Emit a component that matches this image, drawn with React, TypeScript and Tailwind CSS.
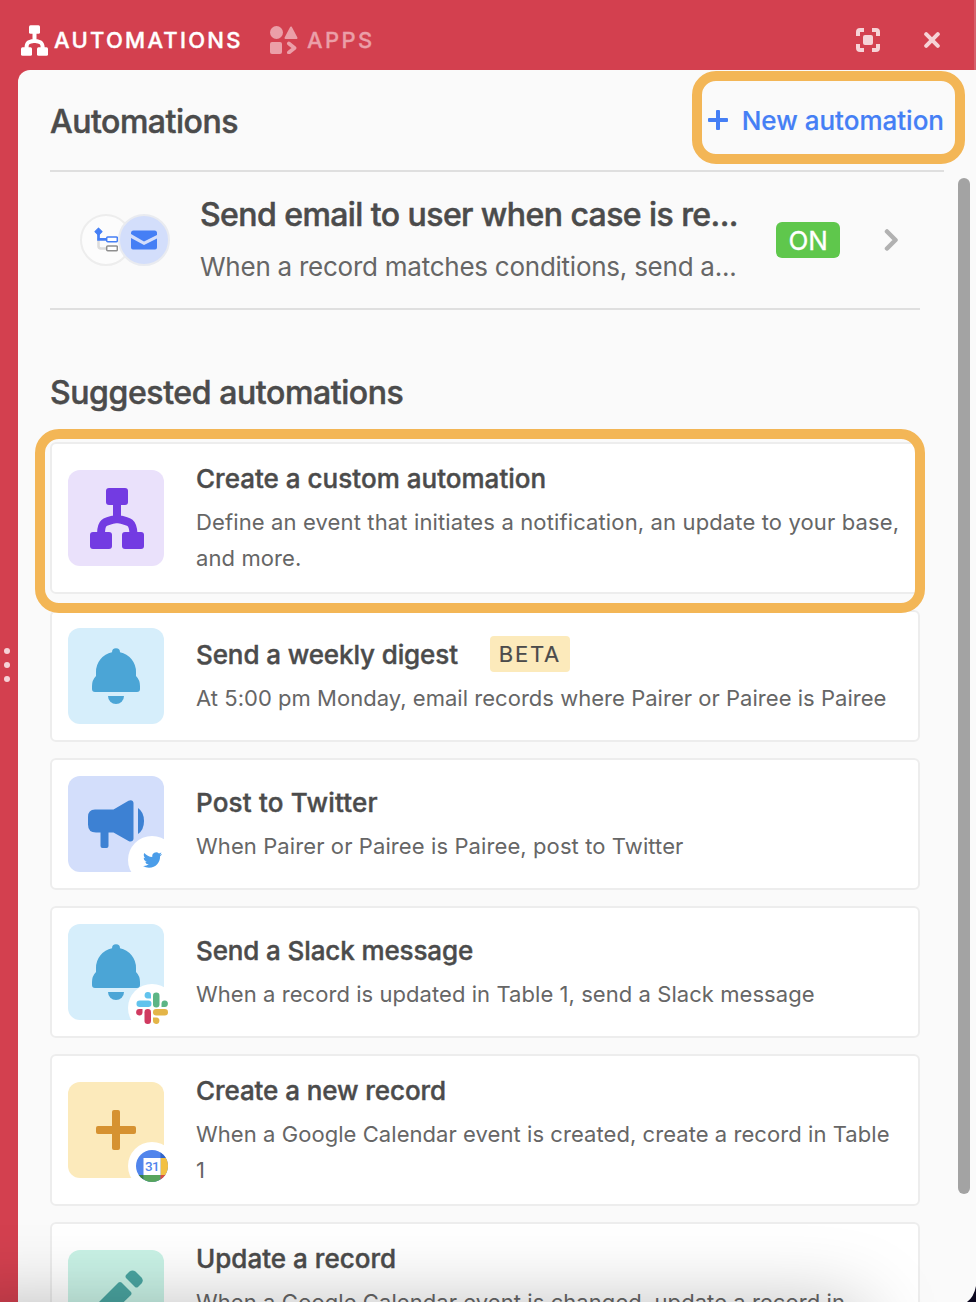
import React from "react";

type SvgProps = { className?: string };

function FlowIcon({ className }: SvgProps) {
  return (
    <svg viewBox="0 0 54 61" className={className} fill="currentColor">
      <rect x="16" y="0" width="22" height="17" rx="3" />
      <rect x="0" y="44" width="22" height="17" rx="3" />
      <rect x="32" y="44" width="22" height="17" rx="3" />
      <path d="M27 15V31M11 46C11 34 14 33.500 27 31C40 33.500 43 34 43.500 46" fill="none" stroke="currentColor" strokeWidth="8" />
    </svg>
  );
}

function AppsIcon({ className }: SvgProps) {
  return (
    <svg viewBox="0 0 28 28" className={className} fill="currentColor">
      <circle cx="6.500" cy="6.500" r="6.500" />
      <path d="M21 1.500L26.500 12H15.500Z" stroke="currentColor" strokeWidth="2" strokeLinejoin="round" />
      <rect x="0" y="16" width="12" height="12" rx="2" />
      <path d="M18.900 17.500L24.500 22L18.900 26.500" fill="none" stroke="currentColor" strokeWidth="3.800" strokeLinecap="round" strokeLinejoin="round" />
    </svg>
  );
}

function FullscreenIcon({ className }: SvgProps) {
  return (
    <svg viewBox="0 0 24 24" className={className} fill="none" stroke="currentColor" strokeWidth="4">
      <path d="M2 8V4Q2 2 4 2H8M16 2H20Q22 2 22 4V8M22 16V20Q22 22 20 22H16M8 22H4Q2 22 2 20V16" />
      <rect x="7" y="7" width="10" height="10" rx="2" fill="currentColor" stroke="none" />
    </svg>
  );
}

function CloseIcon({ className }: SvgProps) {
  return (
    <svg viewBox="0 0 16 16" className={className} fill="none" stroke="currentColor" strokeWidth="4" strokeLinecap="round">
      <path d="M2.200 2.200L13.800 13.800M13.800 2.200L2.200 13.800" />
    </svg>
  );
}

function PlusIcon({ className }: SvgProps) {
  return (
    <svg viewBox="0 0 40 40" className={className} fill="currentColor">
      <rect x="16" y="0" width="8" height="40" rx="2" />
      <rect x="0" y="16" width="40" height="8" rx="2" />
    </svg>
  );
}

function ConditionIcon({ className }: SvgProps) {
  return (
    <svg viewBox="0 0 24 26" className={className} fill="none">
      <path d="M4.500 11V19Q4.500 21.500 7 21.500H12" stroke="#dcdcdc" strokeWidth="2.600" />
      <path d="M4.500 6V12.300H12" stroke="#457ff5" strokeWidth="2.700" />
      <path d="M4.500 1.200L8 4.700L4.500 8.200L1 4.700Z" fill="#457ff5" stroke="#457ff5" strokeWidth="1.200" strokeLinejoin="round" />
      <rect x="12.700" y="9.900" width="10.600" height="4.800" rx="1" stroke="#457ff5" strokeWidth="1.500" fill="#fff" />
      <rect x="12.700" y="18.900" width="10.600" height="4.800" rx="1" stroke="#8f8f8f" strokeWidth="1.500" fill="#fff" />
    </svg>
  );
}

function MailIcon({ className }: SvgProps) {
  return (
    <svg viewBox="0 0 26 20" className={className} fill="#457ff5">
      <path d="M0 4V3Q0 0.500 2.500 0.500H23.500Q26 0.500 26 3V5L13 11.500L0 4Z" />
      <path d="M0 8L13 15L26 8.500V17.500Q26 19.500 24 19.500H2Q0 19.500 0 17.500Z" />
    </svg>
  );
}

function BellIcon({ className }: SvgProps) {
  return (
    <svg viewBox="0 0 48 56" className={className} fill="currentColor">
      <path d="M20 4.200A4 4 0 0 1 28 4.200A20 20 0 0 1 44 24V28Q48 32 48 38V41Q48 44 45 44H3Q0 44 0 41V38Q0 32 4 28V24A20 20 0 0 1 20 4.200Z" />
      <path d="M16 48H32A8 8 0 0 1 16 48Z" />
    </svg>
  );
}

function MegaphoneIcon({ className }: SvgProps) {
  return (
    <svg viewBox="0 0 56 48" className={className} fill="currentColor">
      <path d="M7 9.500H25.500L40.500 0.800C43 -0.600 45.500 0.500 45.500 3V38.500C45.500 41 43 42.500 40.500 41L25.500 32.500H20.500V46Q20.500 48 18.500 48H14.500Q12.500 48 12.500 46V32.500H8Q0 32.500 0 24.500V17Q0 9.500 7 9.500Z" />
      <path d="M50 8Q56 12 56 21T50 34Z" />
    </svg>
  );
}

function TwitterIcon({ className }: SvgProps) {
  return (
    <svg viewBox="0 2 24 20" className={className} fill="#4b9de9">
      <path d="M23.953 4.570a10 10 0 01-2.825.775 4.958 4.958 0 002.163-2.723c-.951.555-2.005.959-3.127 1.184a4.920 4.920 0 00-8.384 4.482C7.690 8.095 4.067 6.130 1.640 3.162a4.822 4.822 0 00-.666 2.475c0 1.710.870 3.213 2.188 4.096a4.904 4.904 0 01-2.228-.616v.060a4.923 4.923 0 003.946 4.827 4.996 4.996 0 01-2.212.085 4.936 4.936 0 004.604 3.417 9.867 9.867 0 01-6.102 2.105c-.390 0-.779-.023-1.170-.067a13.995 13.995 0 007.557 2.209c9.053 0 13.998-7.496 13.998-13.985 0-.210 0-.420-.015-.630A9.935 9.935 0 0024 4.590z" />
    </svg>
  );
}

function SlackIcon({ className }: SvgProps) {
  return (
    <svg viewBox="0 0 32 32" className={className}>
      <g fill="#62c3ed">
        <rect x="0.500" y="8.500" width="15" height="6.500" rx="3.200" />
        <path d="M15 6.500H11.500A3.200 3.200 0 1 1 15 3.500Z" />
      </g>
      <g fill="#5cb585">
        <rect x="17" y="0.500" width="6.500" height="15" rx="3.200" />
        <path d="M25.500 15V11.500A3.200 3.200 0 1 1 28.500 15Z" />
      </g>
      <g fill="#e4b548">
        <rect x="17" y="17" width="15" height="6.500" rx="3.200" />
        <path d="M17 25.500H20.500A3.200 3.200 0 1 1 17 28.500Z" />
      </g>
      <g fill="#d03a60">
        <rect x="8.500" y="17" width="6.500" height="15" rx="3.200" />
        <path d="M6.500 17V20.500A3.200 3.200 0 1 1 3.500 17Z" />
      </g>
    </svg>
  );
}

function CalendarIcon() {
  return (
    <span className="relative flex size-8 items-center justify-center overflow-hidden rounded-full">
      <svg viewBox="0 0 32 32" className="absolute inset-0 size-8">
        <path d="M0 0H32V32H0Z" fill="#5185ec" />
        <path d="M24.500 0H32V8H24.500Z" fill="#3264c8" />
        <path d="M24.500 8H32V25H24.500Z" fill="#f2c043" />
        <path d="M7.500 25H24.500V32H7.500Z" fill="#58a55c" />
        <path d="M0 25H7.500V32H0Z" fill="#3b8041" />
        <path d="M24.500 25H32V32H24.500Z" fill="#d95040" />
        <path d="M7.500 8H24.500V25H7.500Z" fill="#fff" />
      </svg>
      <span className="relative pt-px font-['Roboto',sans-serif] text-[13.500px] leading-none font-medium tracking-[-0.600px] text-[#5185ec]">31</span>
    </span>
  );
}

function PencilIcon({ className }: SvgProps) {
  return (
    <svg viewBox="0 0 56 56" className={className} fill="currentColor">
      <path d="M30.500 12.500Q32 11.500 33.500 12.500L43 22Q44 23.500 43 25L14 53H2V41Z" />
      <path d="M38 5L41.500 1.500Q44.500 -0.500 47.500 1.500L53.500 7.500Q56 10.500 53.500 13.500L50 17Q48.500 18 47 17L38 8Q37 6.500 38 5Z" />
    </svg>
  );
}

type Suggestion = {
  title: string;
  titleClass: string;
  beta?: boolean;
  lines: { text: string; className: string }[];
  tile: string;
  icon: React.ReactNode;
  service?: React.ReactNode;
};

const suggestions: Suggestion[] = [
  {
    title: "Create a custom automation",
    titleClass: "tracking-[0.020px]",
    lines: [
      { text: "Define an event that initiates a notification, an update to your base,", className: "tracking-[0.130px]" },
      { text: "and more.", className: "tracking-[0.100px]" },
    ],
    tile: "bg-[#eae1fb] text-[#733be2]",
    icon: <FlowIcon className="ml-0.5 h-[61px] w-[54px]" />,
  },
  {
    title: "Send a weekly digest",
    titleClass: "tracking-[-0.110px]",
    beta: true,
    lines: [{ text: "At 5:00 pm Monday, email records where Pairer or Pairee is Pairee", className: "tracking-[0.030px]" }],
    tile: "bg-[#d6eefb] text-[#4ba5d6]",
    icon: <BellIcon className="h-14 w-12" />,
  },
  {
    title: "Post to Twitter",
    titleClass: "tracking-[0.200px]",
    lines: [{ text: "When Pairer or Pairee is Pairee, post to Twitter", className: "tracking-[0.100px]" }],
    tile: "bg-[#d3defb] text-[#3d81d3]",
    icon: <MegaphoneIcon className="h-12 w-14" />,
    service: <TwitterIcon className="h-4 w-[19px]" />,
  },
  {
    title: "Send a Slack message",
    titleClass: "tracking-[-0.120px]",
    lines: [{ text: "When a record is updated in Table 1, send a Slack message", className: "tracking-[0.060px]" }],
    tile: "bg-[#d6eefb] text-[#4ba5d6]",
    icon: <BellIcon className="h-14 w-12" />,
    service: <SlackIcon className="size-8" />,
  },
  {
    title: "Create a new record",
    titleClass: "tracking-[-0.080px]",
    lines: [
      { text: "When a Google Calendar event is created, create a record in Table", className: "tracking-[0.060px]" },
      { text: "1", className: "" },
    ],
    tile: "bg-[#fceabb] text-[#d69231]",
    icon: <PlusIcon className="size-10" />,
    service: <CalendarIcon />,
  },
  {
    title: "Update a record",
    titleClass: "tracking-[0.020px]",
    lines: [
      { text: "When a Google Calendar event is changed, update a record in", className: "tracking-[0.070px]" },
      { text: "Table 1", className: "tracking-[0.070px]" },
    ],
    tile: "bg-[#c9f2e6] text-[#4aa5a1]",
    icon: <PencilIcon className="size-14" />,
  },
];

function SuggestionCard({ item }: { item: Suggestion }) {
  return (
    <article className="flex shrink-0 items-center gap-8 rounded-md border-2 border-[#ededed] bg-white p-4">
      <div className={`relative flex size-24 shrink-0 items-center justify-center rounded-xl ${item.tile}`}>
        {item.icon}
        {item.service && (
          <span className="absolute -right-3 -bottom-3 flex size-12 items-center justify-center rounded-full bg-white">{item.service}</span>
        )}
      </div>
      <div className="min-w-0 whitespace-nowrap">
        <div className="flex h-[38px] items-center gap-8 pb-0.5">
          <h3 className={`text-[26px] font-medium text-[#4b4b4b] [-webkit-text-stroke:0.4px_#4b4b4b] ${item.titleClass}`}>{item.title}</h3>
          {item.beta && (
            <span className="flex h-9 w-20 items-center justify-center rounded bg-[#fceabb] text-[22px] tracking-[1.800px] text-[#4b4b4b] [-webkit-text-stroke:0.2px_#4b4b4b]">BETA</span>
          )}
        </div>
        <p className="mt-1.5 text-[22px] leading-9 text-[#666666]">
          {item.lines.map((line) => (
            <span key={line.text} className={`block ${line.className}`}>{line.text}</span>
          ))}
        </p>
      </div>
    </article>
  );
}

export default function App() {
  return (
    <div className="relative flex h-[1302px] w-[976px] flex-col overflow-hidden bg-[#d3404f] font-['Inter','Liberation_Sans',sans-serif]">
      <header className="flex h-[70px] shrink-0 items-center justify-between border-r-2 border-[#d7606c] pt-2.5 pr-[34px] pl-[21px]">
        <nav className="flex items-center">
          <span className="flex items-center text-white">
            <FlowIcon className="h-[31px] w-[27px]" />
            <span className="ml-1.5 w-[216px] text-[22px] font-medium tracking-[2.260px] [-webkit-text-stroke:0.4px_#ffffff]">AUTOMATIONS</span>
          </span>
          <span className="flex items-center text-[#eb9fa8]">
            <AppsIcon className="size-7" />
            <span className="ml-[9px] text-[22px] font-medium tracking-[2.350px] [-webkit-text-stroke:0.3px_#eb9fa8]">APPS</span>
          </span>
        </nav>
        <div className="flex items-center gap-11 text-[#f6d3d7]">
          <FullscreenIcon className="size-6" />
          <CloseIcon className="size-4" />
        </div>
      </header>

      <div className="flex min-h-0 flex-1">
        <aside className="flex w-[18px] shrink-0 flex-col items-start gap-2 pt-[578px] pl-1">
          <i className="size-1.5 rounded-full bg-[#f6d3d7]" />
          <i className="size-1.5 rounded-full bg-[#f6d3d7]" />
          <i className="size-1.5 rounded-full bg-[#f6d3d7]" />
        </aside>
        <main className="flex min-w-0 flex-1 flex-col overflow-hidden rounded-tl-xl bg-[#fafafa] pl-8">
          <div className="mr-8 flex h-[102px] shrink-0 items-center justify-between border-b-2 border-[#dfdfdf]">
            <h1 className="pt-[3px] text-[32px] font-medium tracking-[-0.480px] text-[#4b4b4b] [-webkit-text-stroke:0.5px_#4b4b4b]">Automations</h1>
            <button className="flex items-center gap-3.5 whitespace-nowrap text-[#457ff5]">
              <PlusIcon className="size-5" />
              <span className="pt-px text-[26px] font-medium tracking-[0px] [-webkit-text-stroke:0.2px_#457ff5]">New automation</span>
            </button>
          </div>

          <div className="flex min-h-0 flex-1">
            <div className="flex w-[870px] shrink-0 flex-col overflow-hidden">
              <section className="flex h-[138px] shrink-0 items-center border-b-2 border-[#dfdfdf] pl-[30px]">
                <div className="flex w-[120px] shrink-0 items-center">
                  <span className="flex size-[52px] items-center justify-center rounded-full border-2 border-[#ededed] bg-[#fcfcfc]">
                    <ConditionIcon className="h-[26px] w-6" />
                  </span>
                  <span className="-ml-3.5 flex size-[52px] items-center justify-center rounded-full border-2 border-[#e9ebf0] bg-[#d3defb]">
                    <MailIcon className="h-5 w-[26px]" />
                  </span>
                </div>
                <div className="w-[576px] whitespace-nowrap">
                  <h2 className="text-[32px] leading-[44px] font-medium tracking-[-0.570px] text-[#4b4b4b] [-webkit-text-stroke:0.5px_#4b4b4b]">Send email to user when case is re...</h2>
                  <p className="mt-2.5 text-[26px] leading-[40px] tracking-[-0.250px] text-[#666666]">When a record matches conditions, send a...</p>
                </div>
                <span className="flex h-9 w-16 items-center justify-center rounded-md bg-[#5fc74c] text-[26px] tracking-[-0.300px] text-white [-webkit-text-stroke:0.3px_#ffffff]">ON</span>
                <svg viewBox="0 0 14 22" className="ml-11 h-[22px] w-3.5" fill="none" stroke="#b1b1b1" strokeWidth="4.500" strokeLinecap="round" strokeLinejoin="round">
                  <path d="M3 2.500L11.500 11L3 19.500" />
                </svg>
              </section>
              <h2 className="mt-[59px] shrink-0 text-[32px] leading-[48px] font-medium tracking-[-0.410px] text-[#4b4b4b] [-webkit-text-stroke:0.5px_#4b4b4b]">Suggested automations</h2>
              <div className="mt-[25px] flex flex-col gap-4">
                {suggestions.map((item) => (
                  <SuggestionCard key={item.title} item={item} />
                ))}
              </div>
            </div>
            <div className="mt-1.5 ml-[38px] h-[1016px] w-3 rounded-full bg-[#a3a3a3]" />
          </div>
        </main>
      </div>

      <div className="pointer-events-none absolute top-[71px] left-[692px] h-[93px] w-[273px] rounded-[24px] border-[10px] border-[#f3b656]" />
      <div className="pointer-events-none absolute top-[429px] left-[35px] h-[184px] w-[890px] rounded-[24px] border-[10px] border-[#f3b656]" />
      <div className="pointer-events-none absolute top-[1308px] left-[-60px] h-[200px] w-[922px] shadow-[0_0_80px_rgba(0,0,0,0.280)]" />
      <svg viewBox="0 0 10 18" className="absolute right-0 bottom-0 h-[18px] w-2.5">
        <path d="M10 2Q8 13 1 18H10Z" fill="#0c0820" />
      </svg>
    </div>
  );
}
